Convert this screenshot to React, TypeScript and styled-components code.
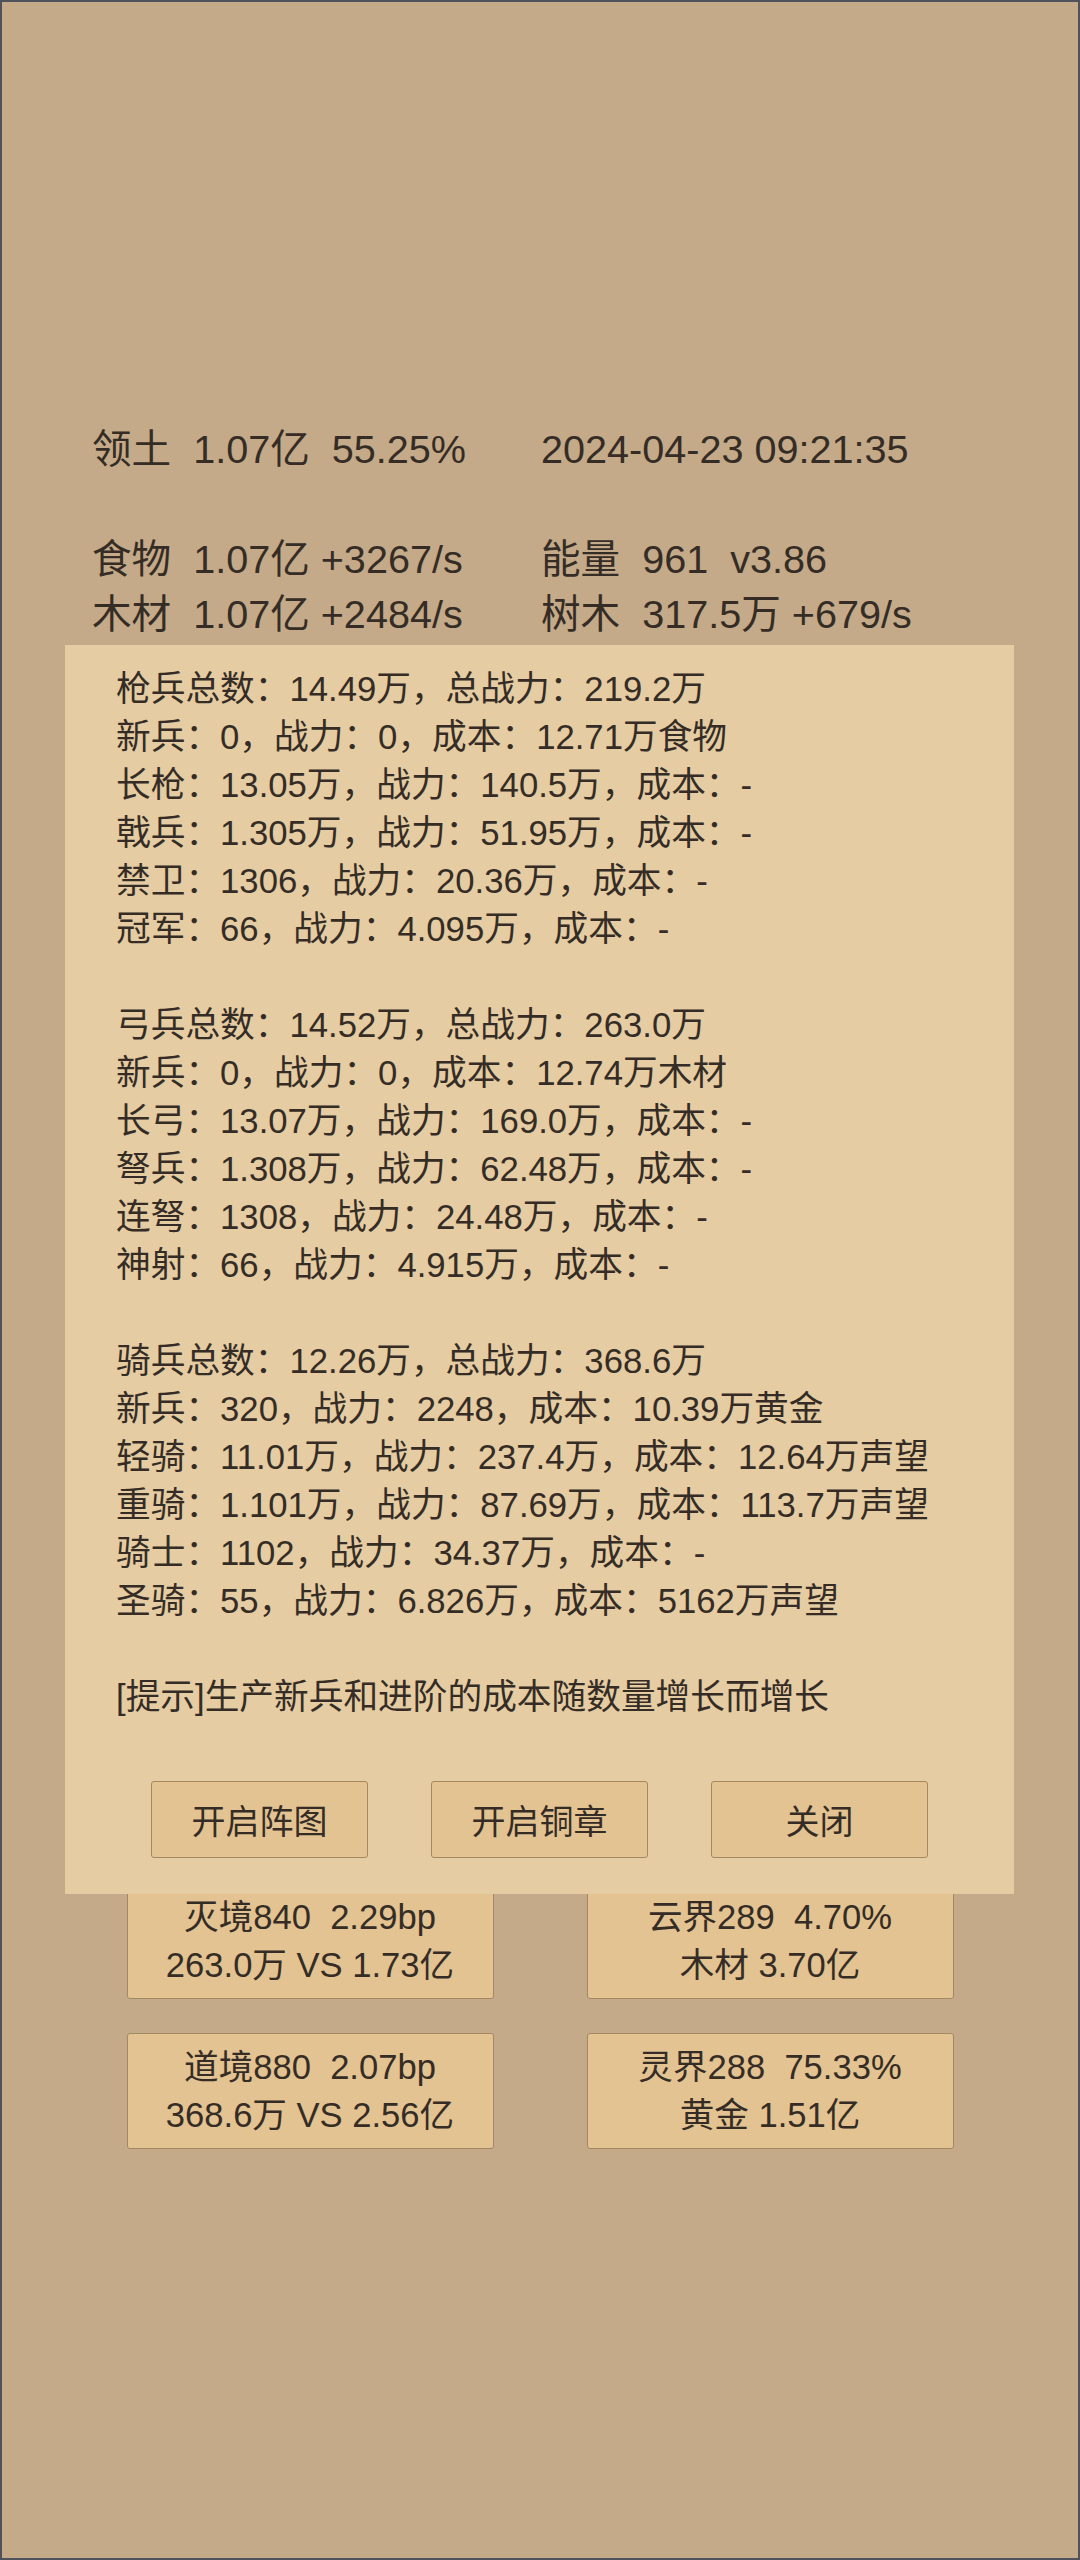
import styled, { createGlobalStyle } from "styled-components";

const GlobalStyle = createGlobalStyle`
    html, body {
        margin: 0;
        padding: 0;
    }
    body {
        font-family: "Liberation Sans", "Noto Sans CJK SC", sans-serif;
        color: #352d25;
    }
`;

const header = [
    ["领土  1.07亿  55.25%", "2024-04-23 09:21:35"],
    ["", ""],
    ["食物  1.07亿 +3267/s", "能量  961  v3.86"],
    ["木材  1.07亿 +2484/s", "树木  317.5万 +679/s"],
];

const troopGroups = [
    [
        "枪兵总数：14.49万，总战力：219.2万",
        "新兵：0，战力：0，成本：12.71万食物",
        "长枪：13.05万，战力：140.5万，成本：-",
        "戟兵：1.305万，战力：51.95万，成本：-",
        "禁卫：1306，战力：20.36万，成本：-",
        "冠军：66，战力：4.095万，成本：-",
    ],
    [
        "弓兵总数：14.52万，总战力：263.0万",
        "新兵：0，战力：0，成本：12.74万木材",
        "长弓：13.07万，战力：169.0万，成本：-",
        "弩兵：1.308万，战力：62.48万，成本：-",
        "连弩：1308，战力：24.48万，成本：-",
        "神射：66，战力：4.915万，成本：-",
    ],
    [
        "骑兵总数：12.26万，总战力：368.6万",
        "新兵：320，战力：2248，成本：10.39万黄金",
        "轻骑：11.01万，战力：237.4万，成本：12.64万声望",
        "重骑：1.101万，战力：87.69万，成本：113.7万声望",
        "骑士：1102，战力：34.37万，成本：-",
        "圣骑：55，战力：6.826万，成本：5162万声望",
    ],
];

const realms = [
    ["灭境840  2.29bp", "263.0万 VS 1.73亿"],
    ["云界289  4.70%", "木材 3.70亿"],
    ["道境880  2.07bp", "368.6万 VS 2.56亿"],
    ["灵界288  75.33%", "黄金 1.51亿"],
];

const App = () => {
    return (
        <Page>
            <GlobalStyle />
            <Header>
                {header.map((row, i) => (
                    <HeaderRow key={i}>
                        <HeaderCell>{row[0]}</HeaderCell>
                        <HeaderCell>{row[1]}</HeaderCell>
                    </HeaderRow>
                ))}
            </Header>
            <RealmGrid>
                {realms.map((r, i) => (
                    <RealmCard key={i}>
                        <RealmLine>{r[0]}</RealmLine>
                        <RealmLine>{r[1]}</RealmLine>
                    </RealmCard>
                ))}
            </RealmGrid>
            <Dialog>
                <DialogText>
                    {troopGroups.map((group, gi) => (
                        <Group key={gi}>
                            {group.map((line, li) => (
                                <Line key={li}>{line}</Line>
                            ))}
                        </Group>
                    ))}
                    <Line>[提示]生产新兵和进阶的成本随数量增长而增长</Line>
                </DialogText>
                <ButtonRow>
                    <Button>开启阵图</Button>
                    <Button>开启铜章</Button>
                    <Button>关闭</Button>
                </ButtonRow>
            </Dialog>
        </Page>
    );
};

const Page = styled.div`
    position: relative;
    box-sizing: border-box;
    width: 1080px;
    height: 2560px;
    background-color: #c4aa88;
    border: 2px solid #4f525c;
    overflow: hidden;
`;

const Header = styled.div`
    padding: 420px 0 0 90px;
`;

const HeaderRow = styled.div`
    display: grid;
    grid-template-columns: 449px 1fr;
    height: 55px;
    align-items: center;
`;

const HeaderCell = styled.div`
    font-size: 39.6px;
    line-height: 55px;
    white-space: pre;
`;

const RealmGrid = styled.div`
    display: grid;
    grid-template-columns: 367px 367px;
    column-gap: 93px;
    row-gap: 34px;
    justify-content: center;
    margin-top: 1241px;
`;

const RealmCard = styled.div`
    box-sizing: border-box;
    height: 116px;
    padding: 9px 0;
    background-color: #e3c391;
    border: 1px solid #a48862;
    border-radius: 3px;
    text-align: center;
`;

const RealmLine = styled.div`
    font-size: 34.6px;
    line-height: 48px;
    white-space: pre;
`;

const Dialog = styled.div`
    position: absolute;
    top: 643px;
    left: 63px;
    width: 949px;
    box-sizing: border-box;
    padding: 20px 0 36px 51px;
    background-color: #e5cca3;
`;

const DialogText = styled.div`
    font-size: 34.7px;
    line-height: 48px;
`;

const Group = styled.div`
    margin-bottom: 48px;
`;

const Line = styled.div`
    white-space: pre;
`;

const ButtonRow = styled.div`
    display: flex;
    justify-content: center;
    gap: 63px;
    margin: 60px 0 0 -51px;
`;

const Button = styled.button`
    box-sizing: border-box;
    width: 217px;
    height: 77px;
    padding: 0;
    background-color: #e3c391;
    border: 1px solid #a48862;
    border-radius: 3px;
    font-family: "Liberation Sans", "Noto Sans CJK SC", sans-serif;
    font-size: 34px;
    color: #352d25;
    cursor: pointer;
`;

export default App;
